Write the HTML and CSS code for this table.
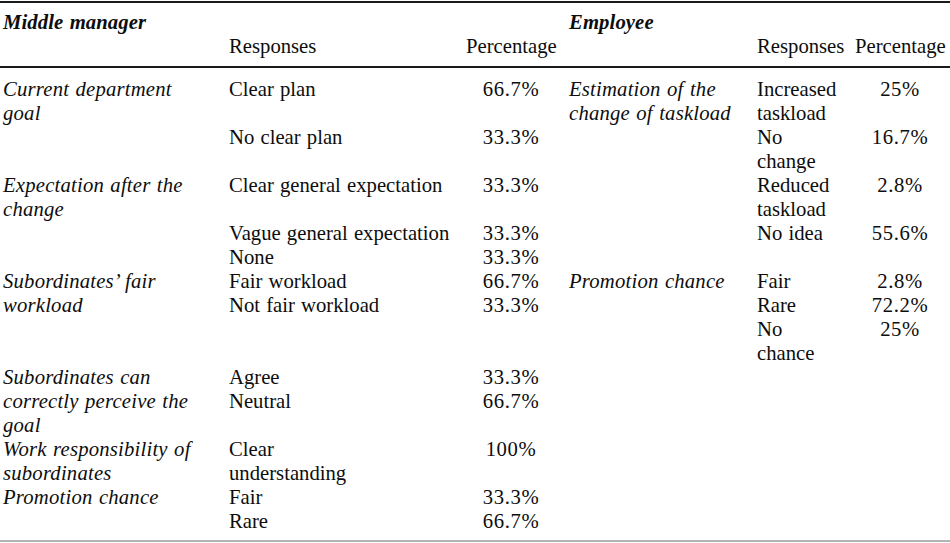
FILE: index.html
```html
<!DOCTYPE html>
<html lang="en">
<head>
    <meta charset="UTF-8">
    <title>Middle manager and employee responses</title>
    <link rel="stylesheet" href="styles.css">
</head>
<body>
    <table class="survey">
        <colgroup>
            <col class="c-item">
            <col class="c-resp">
            <col class="c-pct">
            <col class="c-item2">
            <col class="c-resp2">
            <col class="c-pct2">
            <col class="c-end">
        </colgroup>
        <thead>
            <tr class="head-top">
                <th class="group lead" colspan="3">Middle manager</th>
                <th class="group gap" colspan="4">Employee</th>
            </tr>
            <tr class="head-sub">
                <th class="lead"></th>
                <th class="sub">Responses</th>
                <th class="sub pct">Percentage</th>
                <th class="gap"></th>
                <th class="sub">Responses</th>
                <th class="sub pct">Percentage</th>
                <th></th>
            </tr>
        </thead>
        <tbody>
            <tr class="first">
                <td class="item lead">Current department<br>goal</td>
                <td>Clear plan</td>
                <td class="pct">66.7%</td>
                <td class="item gap">Estimation of the<br>change of taskload</td>
                <td>Increased<br>taskload</td>
                <td class="pct">25%</td>
                <td></td>
            </tr>
            <tr>
                <td class="lead"></td>
                <td>No clear plan</td>
                <td class="pct">33.3%</td>
                <td class="gap"></td>
                <td>No<br>change</td>
                <td class="pct">16.7%</td>
                <td></td>
            </tr>
            <tr>
                <td class="item lead">Expectation after the<br>change</td>
                <td>Clear general expectation</td>
                <td class="pct">33.3%</td>
                <td class="gap"></td>
                <td>Reduced<br>taskload</td>
                <td class="pct">2.8%</td>
                <td></td>
            </tr>
            <tr>
                <td class="lead"></td>
                <td>Vague general expectation</td>
                <td class="pct">33.3%</td>
                <td class="gap"></td>
                <td>No idea</td>
                <td class="pct">55.6%</td>
                <td></td>
            </tr>
            <tr>
                <td class="lead"></td>
                <td>None</td>
                <td class="pct">33.3%</td>
                <td class="gap"></td>
                <td></td>
                <td></td>
                <td></td>
            </tr>
            <tr>
                <td class="item lead" rowspan="2">Subordinates&rsquo; fair<br>workload</td>
                <td>Fair workload</td>
                <td class="pct">66.7%</td>
                <td class="item gap">Promotion chance</td>
                <td>Fair</td>
                <td class="pct">2.8%</td>
                <td></td>
            </tr>
            <tr>
                <td>Not fair workload</td>
                <td class="pct">33.3%</td>
                <td class="gap"></td>
                <td>Rare</td>
                <td class="pct">72.2%</td>
                <td></td>
            </tr>
            <tr>
                <td class="lead"></td>
                <td></td>
                <td></td>
                <td class="gap"></td>
                <td>No<br>chance</td>
                <td class="pct">25%</td>
                <td></td>
            </tr>
            <tr class="single">
                <td class="item lead" rowspan="2">Subordinates can<br>correctly perceive the<br>goal</td>
                <td>Agree</td>
                <td class="pct">33.3%</td>
                <td class="gap"></td>
                <td></td>
                <td></td>
                <td></td>
            </tr>
            <tr class="double">
                <td>Neutral</td>
                <td class="pct">66.7%</td>
                <td class="gap"></td>
                <td></td>
                <td></td>
                <td></td>
            </tr>
            <tr>
                <td class="item lead">Work responsibility of<br>subordinates</td>
                <td>Clear<br>understanding</td>
                <td class="pct">100%</td>
                <td class="gap"></td>
                <td></td>
                <td></td>
                <td></td>
            </tr>
            <tr>
                <td class="item lead">Promotion chance</td>
                <td>Fair</td>
                <td class="pct">33.3%</td>
                <td class="gap"></td>
                <td></td>
                <td></td>
                <td></td>
            </tr>
            <tr class="last">
                <td class="lead"></td>
                <td>Rare</td>
                <td class="pct">66.7%</td>
                <td class="gap"></td>
                <td></td>
                <td></td>
                <td></td>
            </tr>
        </tbody>
    </table>
</body>
</html>
```

FILE: styles.css
```css
body {
    margin: 0;
    background: #fff;
    color: #0d0d0d;
    font-family: "Liberation Serif", "Times New Roman", serif;
    font-size: 20.7px;
}
.survey {
    width: 950px;
    table-layout: fixed;
    border-collapse: collapse;
    border-top: 2px solid #1a1a1a;
    border-bottom: 2px solid #b4b4b4;
    margin-top: 1px;
}
.c-item { width: 229px; }
.c-resp { width: 237px; }
.c-pct { width: 90px; }
.c-item2 { width: 201px; }
.c-resp2 { width: 98px; }
.c-pct2 { width: 90px; }
.c-end { width: 5px; }
.survey th,
.survey td {
    padding: 0;
    line-height: 24px;
    text-align: left;
    vertical-align: top;
    font-weight: normal;
    white-space: nowrap;
    word-spacing: 1px;
}
.survey .lead {
    padding-left: 3px;
}
.survey .gap {
    padding-left: 13px;
}
.head-top th {
    padding-top: 7px;
}
.head-sub th {
    padding-bottom: 8px;
    border-bottom: 2px solid #1a1a1a;
}
.survey .group {
    font-weight: bold;
    font-style: italic;
    letter-spacing: 0.1px;
}
.survey .pct {
    text-align: center;
    letter-spacing: 0.6px;
}
.survey th.pct {
    letter-spacing: 0;
}
.item {
    font-style: italic;
    letter-spacing: 0.2px;
}
.single {
    height: 24px;
}
.double {
    height: 48px;
}
.first td {
    padding-top: 9px;
}
.last td {
    padding-bottom: 7px;
}
```
